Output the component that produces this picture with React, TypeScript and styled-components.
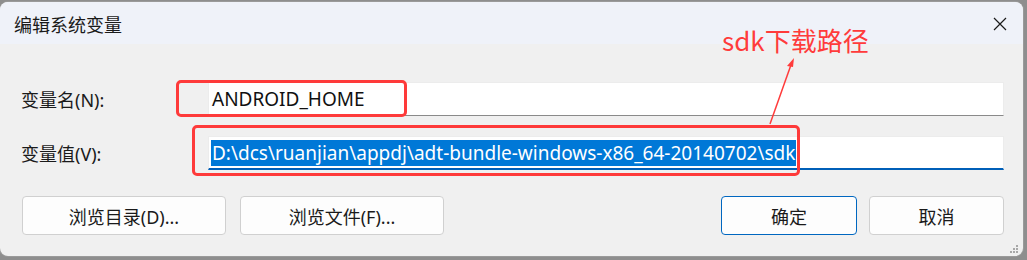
import React from "react";
import styled, { createGlobalStyle } from "styled-components";

const Global = createGlobalStyle`
  html, body { margin: 0; padding: 0; }
  body {
    background: #8e8e8e;
    width: 1027px;
    height: 260px;
    overflow: hidden;
    font-family: "Noto Sans", "Noto Sans CJK SC", sans-serif;
  }
`;

const Dialog = styled.div`
  position: relative;
  margin: 2px 0 0 0;
  width: 1023px;
  height: 254px;
  border-radius: 8px;
  background: #f0f0f0;
  overflow: hidden;
  display: flex;
  flex-direction: column;
  box-shadow: 0 0 0 1px #9a9a9a;
`;

const TitleBar = styled.div`
  height: 42px;
  background: #eff2f9;
  display: flex;
  align-items: center;
  justify-content: space-between;
  padding: 0 16px 0 14px;
`;

const Title = styled.div`
  font-family: "Noto Sans CJK SC", sans-serif;
  font-size: 18px;
  color: #1a1a1a;
  margin-top: 1px;
`;

const Close = styled.div`
  width: 14px;
  height: 14px;
  display: flex;
  margin-top: 2px;
`;

const Body = styled.div`
  padding: 38px 19px 0 21px;
  display: grid;
  grid-template-columns: 187px 796px;
  row-gap: 20px;
  align-items: center;
`;

const Label = styled.div`
  font-family: "Noto Sans", "Noto Sans CJK SC", sans-serif;
  font-size: 18px;
  color: #1a1a1a;
`;

const Field = styled.div<{ $focused?: boolean }>`
  height: 34px;
  box-sizing: border-box;
  background: #ffffff;
  border: 1px solid #ececec;
  border-bottom: ${(p) => (p.$focused ? "2px solid #005fb8" : "1px solid #8a8a8a")};
  display: flex;
  align-items: center;
  padding-left: 2px;
  font-family: "Noto Sans", sans-serif;
  font-size: 19px;
  color: #111;
`;

const Plain = styled.span`
  padding-left: 1px;
`;

const Selected = styled.span`
  background: #0078d7;
  color: #ffffff;
  line-height: 26px;
  padding: 0 1px;
`;

const ButtonRow = styled.div`
  display: flex;
  padding: 26px 19px 0 22px;
`;

const Group = styled.div<{ $gap: number }>`
  display: flex;
  gap: ${(p) => p.$gap}px;
`;

const Spacer = styled.div`
  flex: 1;
`;

const Button = styled.div<{ $w: number; $primary?: boolean }>`
  width: ${(p) => p.$w}px;
  height: 39px;
  box-sizing: border-box;
  background: #fdfdfd;
  border: 1px solid ${(p) => (p.$primary ? "#0067c0" : "#d0d0d0")};
  border-radius: 4px;
  display: flex;
  align-items: center;
  justify-content: center;
  font-family: "Noto Sans", "Noto Sans CJK SC", sans-serif;
  font-size: 18px;
  color: #1a1a1a;
`;

const RedBox = styled.div<{ $x: number; $y: number; $w: number; $h: number }>`
  position: absolute;
  left: ${(p) => p.$x}px;
  top: ${(p) => p.$y}px;
  width: ${(p) => p.$w}px;
  height: ${(p) => p.$h}px;
  box-sizing: border-box;
  border: 3px solid #fe3a3a;
  border-radius: 5px;
  pointer-events: none;
`;

const Note = styled.div`
  position: absolute;
  left: 722px;
  top: 20px;
  font-family: "Noto Sans CJK SC", sans-serif;
  font-size: 26px;
  color: #ff3b3b;
  line-height: 36px;
`;

const Arrow = styled.svg`
  position: absolute;
  left: 760px;
  top: 52px;
`;

const Grip = styled.svg`
  position: absolute;
  right: 4px;
  bottom: 2px;
`;

export default function App() {
  return (
    <>
      <Global />
      <Dialog>
        <TitleBar>
          <Title>编辑系统变量</Title>
          <Close>
            <svg width="14" height="14" viewBox="0 0 14 14">
              <path d="M1 1L13 13M13 1L1 13" stroke="#1a1a1a" strokeWidth="1.2" />
            </svg>
          </Close>
        </TitleBar>
        <Body>
          <Label>变量名(N):</Label>
          <Field>
            <Plain>ANDROID_HOME</Plain>
          </Field>
          <Label>变量值(V):</Label>
          <Field $focused>
            <Selected>D:\dcs\ruanjian\appdj\adt-bundle-windows-x86_64-20140702\sdk</Selected>
          </Field>
        </Body>
        <ButtonRow>
          <Group $gap={14}>
            <Button $w={204}>浏览目录(D)...</Button>
            <Button $w={204}>浏览文件(F)...</Button>
          </Group>
          <Spacer />
          <Group $gap={12}>
            <Button $w={136} $primary>确定</Button>
            <Button $w={135}>取消</Button>
          </Group>
        </ButtonRow>
        <RedBox $x={176} $y={78} $w={231} $h={37} />
        <RedBox $x={192} $y={123} $w={608} $h={51} />
        <Note>sdk下载路径</Note>
        <Arrow width="40" height="72" viewBox="0 0 40 72">
          <path d="M10 70 L32 8" stroke="#ff3b3b" strokeWidth="1.5" fill="none" />
          <path d="M34 4 L27 12 L33 13 Z" fill="#ff3b3b" />
        </Arrow>
        <Grip width="10" height="10" viewBox="0 0 10 10">
          <rect x="7" y="1" width="2" height="2" fill="#a8a8a8" />
          <rect x="4" y="4" width="2" height="2" fill="#a8a8a8" />
          <rect x="7" y="4" width="2" height="2" fill="#a8a8a8" />
          <rect x="1" y="7" width="2" height="2" fill="#a8a8a8" />
          <rect x="4" y="7" width="2" height="2" fill="#a8a8a8" />
          <rect x="7" y="7" width="2" height="2" fill="#a8a8a8" />
        </Grip>
      </Dialog>
    </>
  );
}
